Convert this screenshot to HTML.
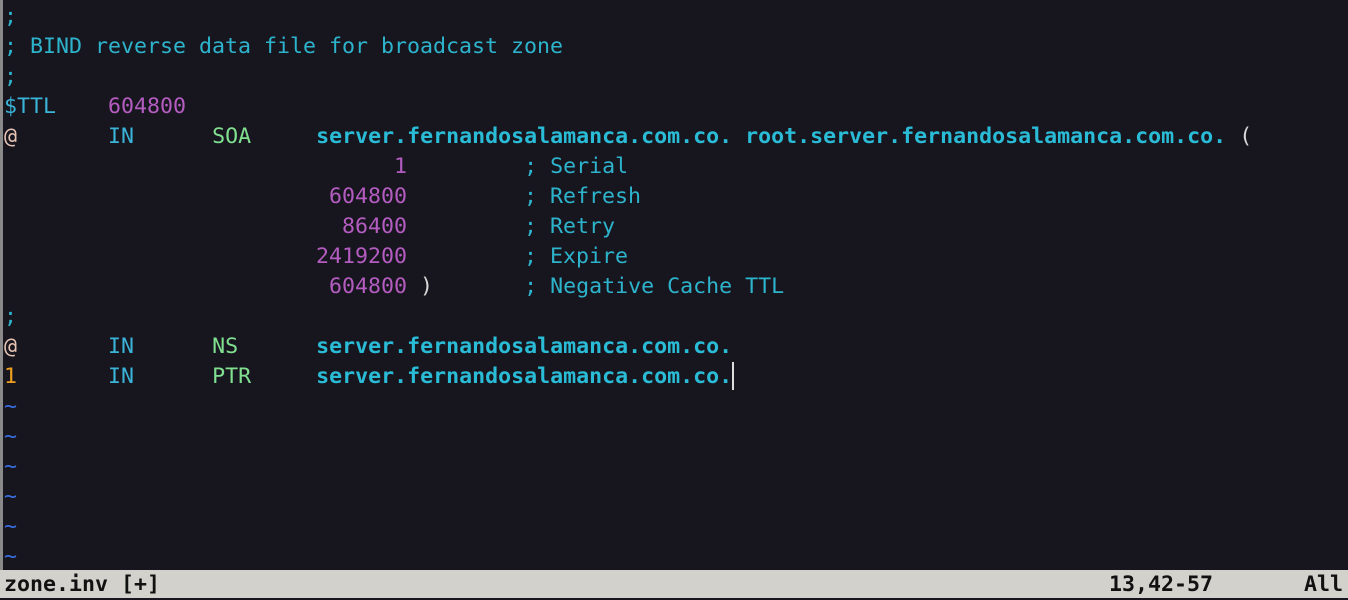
<!DOCTYPE html><html><head><style>
html,body{margin:0;padding:0;width:1348px;height:600px;overflow:hidden;background:#17161f}
body{position:relative}
.edge{position:absolute;left:0;top:0;width:3px;height:570px;background:#8a8a8a}
pre{margin:0;position:absolute;left:4px;top:2px;font-family:"DejaVu Sans Mono","Liberation Mono",monospace;font-size:21.6px;line-height:30px;color:#d0d0d0}
.c{color:#2db4cc}.m{color:#b45cc0}.g{color:#80e090}.i{color:#3ab4d8}.b{color:#2abcd6;font-weight:bold}.p{color:#e8c4b4}.o{color:#f0a020}.t{color:#3a6ee0}.w{color:#d8d8d8}
.status{position:absolute;left:0;top:570px;width:1348px;height:28px;background:#d3d1cb}
.status pre{top:0;left:4px;color:#111;font-weight:bold;line-height:30px}
.bot{position:absolute;left:0;top:598px;width:1348px;height:2px;background:#17161f}
.cur{position:absolute;left:732px;top:362px;width:1.5px;height:28px;background:#ddd}
</style></head><body><div class="edge"></div><pre><span class="c">;</span>
<span class="c">; BIND reverse data file for broadcast zone</span>
<span class="c">;</span>
<span class="i">$TTL</span>    <span class="m">604800</span>
<span class="p">@</span>       <span class="i">IN</span>      <span class="g">SOA</span>     <span class="b">server.fernandosalamanca.com.co.</span> <span class="b">root.server.fernandosalamanca.com.co.</span> <span class="w">(</span>
                              <span class="m">1</span>         <span class="c">; Serial</span>
                         <span class="m">604800</span>         <span class="c">; Refresh</span>
                          <span class="m">86400</span>         <span class="c">; Retry</span>
                        <span class="m">2419200</span>         <span class="c">; Expire</span>
                         <span class="m">604800</span> <span class="w">)</span>       <span class="c">; Negative Cache TTL</span>
<span class="c">;</span>
<span class="p">@</span>       <span class="i">IN</span>      <span class="g">NS</span>      <span class="b">server.fernandosalamanca.com.co.</span>
<span class="o">1</span>       <span class="i">IN</span>      <span class="g">PTR</span>     <span class="b">server.fernandosalamanca.com.co.</span>
<span class="t">~</span>
<span class="t">~</span>
<span class="t">~</span>
<span class="t">~</span>
<span class="t">~</span>
<span class="t">~</span></pre><div class="cur"></div>
<div class="status"><pre>zone.inv [+]                                                                         13,42-57       All</pre></div><div class="bot"></div>
</body></html>
